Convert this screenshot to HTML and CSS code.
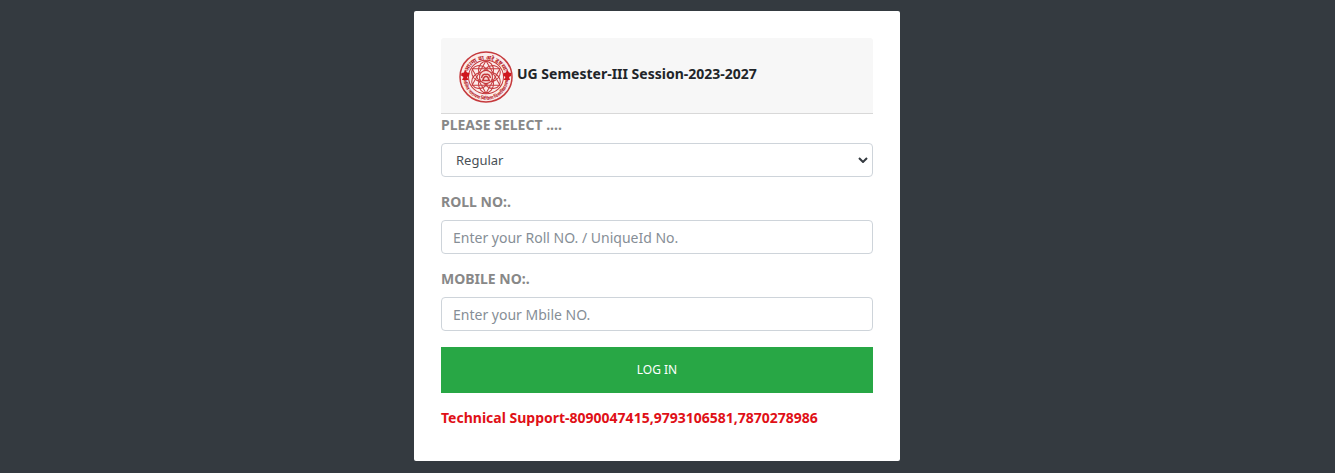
FILE: index.html
```html
<!DOCTYPE html>
<html lang="en">
<head>
<meta charset="utf-8">
<meta name="viewport" content="width=device-width, initial-scale=1">
<title>UG Semester-III Login</title>
<link rel="stylesheet" href="styles.css">
</head>
<body>
<main class="login-card">
  <header class="card-header">
    <svg class="logo" viewBox="0 0 108 102" preserveAspectRatio="none" role="img" aria-label="University seal">
      <defs>
        <path id="arc-top" d="M15 54 A39 37 0 0 1 93 54"/>
        <path id="arc-bottom" d="M9 53 A45 43 0 0 0 99 53"/>
      </defs>
      <g fill="none" stroke="#c5393c">
        <ellipse cx="54" cy="51" rx="52" ry="49" stroke-width="3" fill="#fbecea"/>
        <ellipse cx="54" cy="51" rx="35" ry="33" stroke-width="2"/>
        <g stroke-width="2">
          <path d="M54 19 L82 67 H26 Z M54 83 L26 35 H82 Z"/>
          <ellipse cx="54" cy="38" rx="15" ry="18"/>
          <ellipse cx="54" cy="38" rx="15" ry="18" transform="rotate(60 54 51)"/>
          <ellipse cx="54" cy="38" rx="15" ry="18" transform="rotate(120 54 51)"/>
          <ellipse cx="54" cy="38" rx="15" ry="18" transform="rotate(180 54 51)"/>
          <ellipse cx="54" cy="38" rx="15" ry="18" transform="rotate(240 54 51)"/>
          <ellipse cx="54" cy="38" rx="15" ry="18" transform="rotate(300 54 51)"/>
        </g>
        <circle cx="54" cy="51" r="13" stroke-width="2" fill="#f9dfdc"/>
        <path d="M45 53 Q47 44 54 46 Q61 44 63 53 M48 57 Q50 49 54 50 Q58 49 60 57 M46 58 H62" stroke-width="3"/>
      </g>
      <g fill="#cf171d">
        <path d="M12 36 L16 42 L21 43 L20 49 L16 51 L19 57 H6 L9 51 L4 48 L5 43 L10 42 Z"/>
        <path d="M96 36 L100 42 L104 43 L104 49 L100 51 L102 57 H89 L93 51 L88 48 L89 43 L94 42 Z"/>
      </g>
      <text class="seal-text"><textPath href="#arc-top" startOffset="50%">आत्मा वा अरे द्रष्टव्यः</textPath></text>
      <text class="seal-text seal-text-small"><textPath href="#arc-bottom" startOffset="50%">ललित नारायण मिथिला विश्वविद्यालय</textPath></text>
    </svg>
    <h1 class="title">UG Semester-III Session-2023-2027</h1>
  </header>
  <form class="login-form">
    <div class="field">
      <label class="field-label" for="type">PLEASE SELECT ....</label>
      <div class="select-wrap">
        <select class="control select" id="type"><option>Regular</option></select>
        <svg class="chevron" viewBox="0 0 10 6" aria-hidden="true"><path d="M1 1 L5 5 L9 1"/></svg>
      </div>
    </div>
    <div class="field">
      <label class="field-label" for="roll">ROLL NO:.</label>
      <input class="control" id="roll" type="text" placeholder="Enter your Roll NO. / UniqueId No.">
    </div>
    <div class="field">
      <label class="field-label" for="mobile">MOBILE NO:.</label>
      <input class="control" id="mobile" type="text" placeholder="Enter your Mbile NO.">
    </div>
    <button class="submit" type="submit">LOG IN</button>
  </form>
  <p class="support">Technical Support-8090047415,9793106581,7870278986</p>
</main>
</body>
</html>
```
FILE: styles.css
```css
* {
  box-sizing: border-box;
}

body {
  margin: 0;
  padding: 11px 33px 12px 12px;
  background: #343a40;
  color: #212529;
  font: 14px/20px "Noto Sans", "Open Sans", sans-serif;
}

.login-card {
  max-width: 486px;
  margin: 0 auto;
  padding: 27px 27px 33px;
  background: #fff;
  border-radius: 2px;
}

.card-header {
  display: flex;
  align-items: center;
  gap: 4px;
  padding: 13px 18px 10px;
  background: #f7f7f7;
  border-bottom: 1px solid #d8d8d8;
  border-radius: 3px 3px 0 0;
}

.logo {
  flex: none;
  width: 54px;
  height: 52px;
}

.seal-text {
  fill: #b52026;
  font: bold 12px "Noto Sans", "Noto Sans Devanagari", sans-serif;
  text-anchor: middle;
}

.seal-text-small {
  font-size: 9px;
}

.title {
  margin: 0 0 6px;
  font-size: 14px;
  line-height: 20px;
}

.login-form {
  display: flex;
  flex-direction: column;
  gap: 15px;
  padding-top: 1px;
}

.field-label {
  display: block;
  margin-bottom: 8px;
  color: #888;
  font-weight: bold;
}

.control {
  display: block;
  width: 100%;
  height: 34px;
  padding: 0 11px;
  border: 1px solid #ced4da;
  border-radius: 4px;
  background: #fff;
  color: #495057;
  font: inherit;
}

.control::placeholder {
  color: #868e96;
  opacity: 1;
}

.select {
  padding: 0 14px;
  appearance: none;
  font-size: 13px;
}

.select-wrap {
  position: relative;
}

.chevron {
  position: absolute;
  top: 14px;
  right: 5px;
  width: 10px;
  height: 6px;
  fill: none;
  stroke: #343a40;
  stroke-width: 2;
  pointer-events: none;
}

.submit {
  height: 46px;
  margin-top: 1px;
  border: 0;
  background: #28a745;
  color: #fff;
  font: inherit;
  font-size: 12px;
}

.support {
  margin: 15px 0 0;
  color: #e01017;
  font-weight: bold;
}
```
